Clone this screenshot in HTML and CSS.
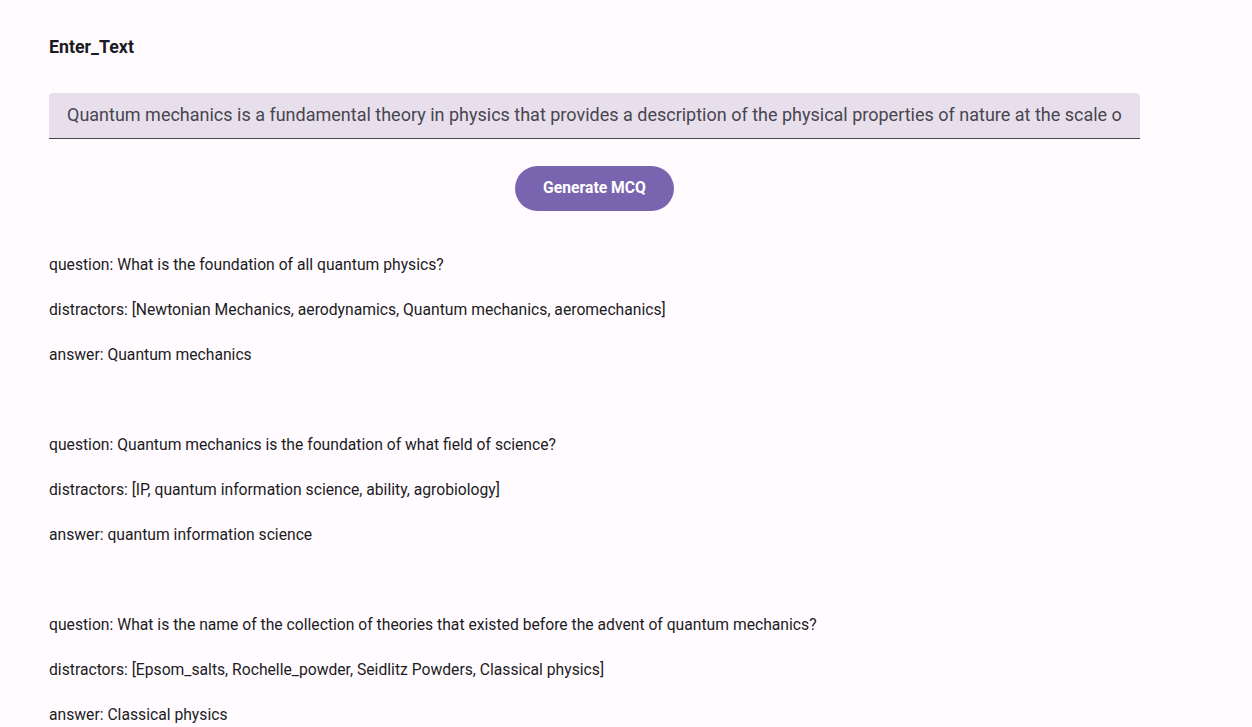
FILE: index.html
```html
<!DOCTYPE html>
<html>
<head>
<meta charset="utf-8">
<link rel="stylesheet" href="styles.css">
</head>
<body>
<div class="page">
  <div class="form">
    <div class="label">Enter_Text</div>
    <div class="field"><span class="field-text">Quantum mechanics is a fundamental theory in physics that provides a description of the physical properties of nature at the scale of atoms and subatomic particles.</span></div>
    <div class="actions"><button class="btn">Generate MCQ</button></div>
  </div>
  <div class="results">
    <div class="group">
      <p class="line">question: What is the foundation of all quantum physics?</p>
      <p class="line">distractors: [Newtonian Mechanics, aerodynamics, Quantum mechanics, aeromechanics]</p>
      <p class="line">answer: Quantum mechanics</p>
    </div>
    <div class="group">
      <p class="line">question: Quantum mechanics is the foundation of what field of science?</p>
      <p class="line">distractors: [IP, quantum information science, ability, agrobiology]</p>
      <p class="line">answer: quantum information science</p>
    </div>
    <div class="group">
      <p class="line">question: What is the name of the collection of theories that existed before the advent of quantum mechanics?</p>
      <p class="line">distractors: [Epsom_salts, Rochelle_powder, Seidlitz Powders, Classical physics]</p>
      <p class="line">answer: Classical physics</p>
    </div>
  </div>
</div>
</body>
</html>
```
FILE: styles.css
```css
html, body {
  margin: 0;
  padding: 0;
  background: #fffbfe;
  font-family: Roboto, "Liberation Sans", sans-serif;
  color: #1c1b1f;
}
.page {
  padding: 36px 112px 0 49px;
}
.form {
  display: flex;
  flex-direction: column;
}
.label {
  font-weight: 700;
  font-size: 17.8px;
  line-height: 22px;
}
.field {
  margin-top: 35px;
  box-sizing: border-box;
  height: 46px;
  background: #e7e0ec;
  border-bottom: 1px solid #49454f;
  border-radius: 4px 4px 0 0;
  padding: 0 18px 2px;
  display: flex;
  align-items: center;
  overflow: hidden;
}
.field-text {
  white-space: nowrap;
  font-size: 18px;
  color: #49454f;
  overflow: hidden;
  display: block;
}
.actions {
  display: flex;
  justify-content: center;
  margin-top: 27px;
}
.btn {
  width: 159px;
  height: 45px;
  border: none;
  border-radius: 23px;
  background: #7965af;
  color: #fff;
  font-family: Roboto, "Liberation Sans", sans-serif;
  font-weight: 700;
  font-size: 15.7px;
  padding: 0 0 2px;
}
.results {
  margin-top: 31px;
}
.group {
  margin-bottom: 45px;
}
.line {
  margin: 0;
  font-size: 15.7px;
  line-height: 45px;
  height: 45px;
}
```
